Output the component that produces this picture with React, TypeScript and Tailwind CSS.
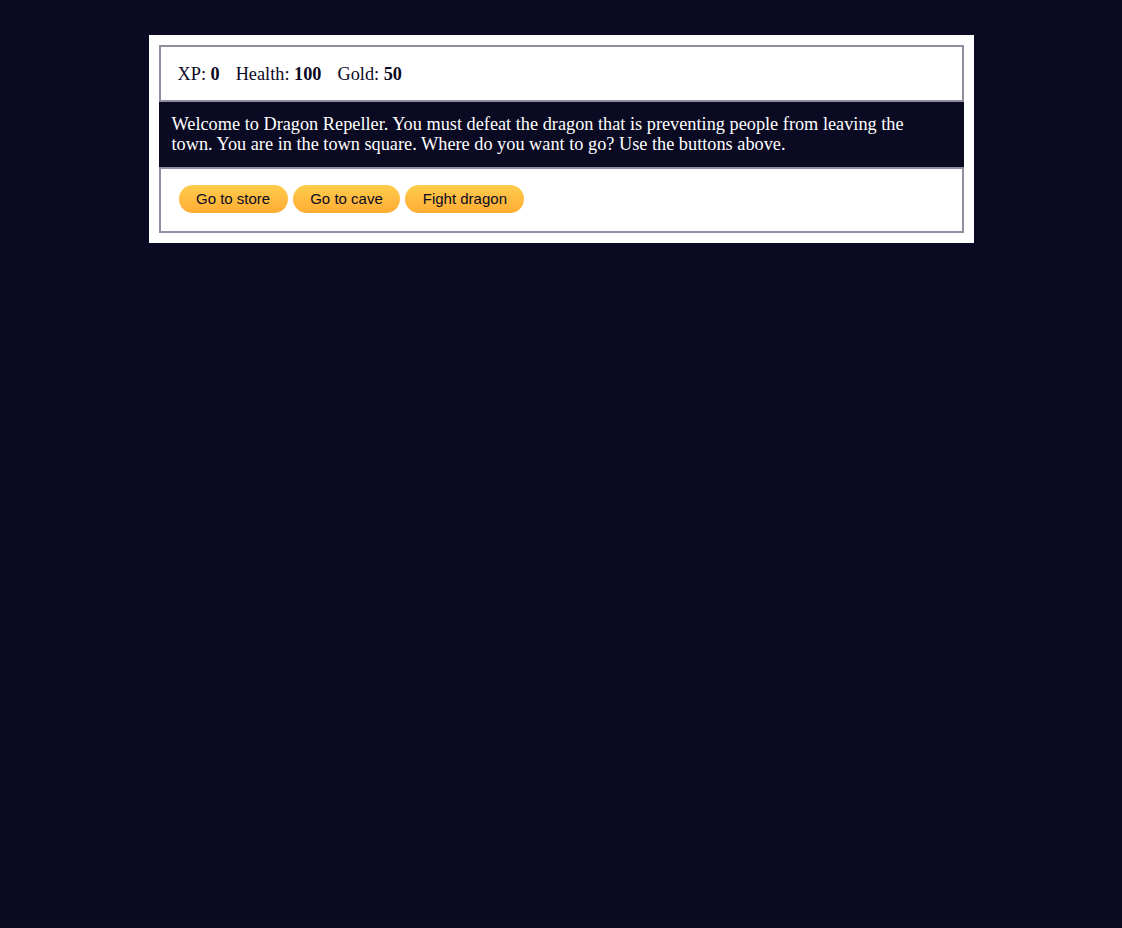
const buttons = ['Go to store', 'Go to cave', 'Fight dragon'];

const stats = [
  { label: 'XP', value: 0 },
  { label: 'Health', value: 100 },
  { label: 'Gold', value: 50 },
];

export default function App() {
  return (
    <div className="min-h-[928px] bg-[#0a0a23] pt-[35px] font-['Liberation_Serif',serif]">
      <div className="mx-auto w-[825px] bg-white p-[10px] text-white">
        <div className="flex gap-[16px] border-2 border-[#8f8f9f] px-[17px] pt-[17px] pb-[15px] text-[18.3px] leading-[21px] text-[#0a0a23]">
          {stats.map((s) => (
            <span key={s.label}>
              {s.label}: <strong>{s.value}</strong>
            </span>
          ))}
        </div>
        <div className="bg-[#0a0a23] pl-[13px] pr-[30px] pt-[12px] pb-[13px] text-[18.3px] leading-[20px] text-white">
          Welcome to Dragon Repeller. You must defeat the dragon that is preventing people from leaving the
          town. You are in the town square. Where do you want to go? Use the buttons above.
        </div>
        <div className="flex gap-[5px] border-2 border-[#8f8f9f] px-[18px] pt-[16px] pb-[18px]">
          {buttons.map((b) => (
            <button
              key={b}
              className="h-[28px] cursor-pointer rounded-full bg-gradient-to-b from-[#fecc4c] to-[#ffac33] px-[17.5px] font-['Liberation_Sans',Arial,sans-serif] text-[15px] text-[#0a0a23]"
            >
              {b}
            </button>
          ))}
        </div>
      </div>
    </div>
  );
}
